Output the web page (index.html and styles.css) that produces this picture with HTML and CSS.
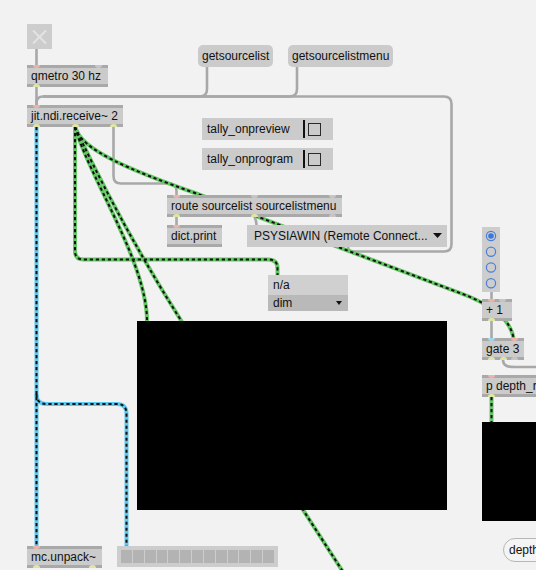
FILE: index.html
```html
<!DOCTYPE html>
<html>
<head>
<meta charset="utf-8">
<title>Patcher</title>
<link rel="stylesheet" href="styles.css">
</head>
<body>
<div class="patch">
  <svg class="cords" width="536" height="570" viewBox="0 0 536 570">
    <defs>
      <path id="c1" d="M75,127 C81,150 130,170 195,193 L460,293 C490,304 510,318 513.5,338"/>
      <path id="c2" d="M75,127 V251 Q75,259.5 83.5,259.5 H268 Q277.5,259.5 277.5,268 V275"/>
      <path id="c3" d="M75,127 C88,175 147,262 147,321"/>
      <path id="c4" d="M75,127 C95,170 130,240 182,322 L345,575"/>
      <path id="c5" d="M491.5,397 V422"/>
      <path id="b1" d="M36.5,127 V546"/>
      <path id="b2" d="M36.5,394 Q36.5,404 46.5,404 H117 Q126.5,404 126.5,414 V546"/>
    </defs>
    <g class="grey">
      <path d="M36.5,49 V65"/>
      <path d="M36.5,87 V105"/>
      <path d="M207,67 V89 Q207,96.5 199.5,96.5 H43 Q36.5,96.5 36.5,103 V105"/>
      <path d="M297,67 V89 Q297,96.5 289.5,96.5 H43"/>
      <path d="M348,247 Q348,251.5 355,251.5 H444 Q451.5,251.5 451.5,244 V104 Q451.5,96.5 444,96.5 H43"/>
      <path d="M113.5,127 V176 Q113.5,183.5 121,183.5 H169 Q176.5,183.5 176.5,191 V195"/>
      <path d="M176.5,217 V225"/>
      <path d="M254.5,217 Q256.5,221 256.5,225"/>
      <path d="M491.5,291 V299"/>
      <path d="M491.5,321 V338"/>
      <path d="M503,360 C503,366 508,367 515,367 H540"/>
    </g>
    <g class="green-base">
      <use href="#c1"/><use href="#c2"/><use href="#c3"/><use href="#c4"/><use href="#c5"/>
    </g>
    <g class="dash">
      <use href="#c1"/><use href="#c2"/><use href="#c3"/><use href="#c4"/><use href="#c5"/>
    </g>
    <g class="blue-base">
      <use href="#b1"/><use href="#b2"/>
    </g>
    <g class="dash">
      <use href="#b1"/><use href="#b2"/>
    </g>
  </svg>

  <div class="toggle">
    <svg width="25" height="25" viewBox="0 0 25 25"><path d="M6,6.5 L19,19.5 M19,6.5 L6,19.5" stroke="#e3e3e3" stroke-width="2" fill="none"/></svg>
  </div>

  <div class="obj n-qmetro"><div class="ports top"><i class="p hot"></i><i class="p"></i></div>qmetro 30 hz<div class="ports bot"><i class="p out"></i></div></div>

  <div class="msg n-msg1">getsourcelist</div>
  <div class="msg n-msg2">getsourcelistmenu</div>

  <div class="obj n-jit"><div class="ports top"><i class="p hot"></i></div>jit.ndi.receive~ 2<div class="ports bot"><i class="p out"></i><i class="p out"></i><i class="p out"></i></div></div>

  <div class="attr n-tally1"><span class="attr-label">tally_onpreview</span><span class="attr-sep"></span><span class="attr-check"></span></div>
  <div class="attr n-tally2"><span class="attr-label">tally_onprogram</span><span class="attr-sep"></span><span class="attr-check"></span></div>

  <div class="obj n-route"><div class="ports top"><i class="p hot"></i><i class="p"></i><i class="p"></i></div>route sourcelist sourcelistmenu<div class="ports bot"><i class="p out"></i><i class="p out"></i><i class="p"></i></div></div>

  <div class="obj n-dict"><div class="ports top"><i class="p hot"></i></div>dict.print</div>

  <div class="umenu"><span>PSYSIAWIN (Remote Connect...</span><svg class="tri" width="9" height="5" viewBox="0 0 9 5"><path d="M0,0 H9 L4.5,5 Z" fill="#111"/></svg></div>

  <div class="na">
    <div class="na-top">n/a</div>
    <div class="na-bot"><span>dim</span><svg width="6" height="4" viewBox="0 0 6 4"><path d="M0,0 H6 L3,4 Z" fill="#111"/></svg></div>
  </div>

  <div class="radio">
    <svg width="18" height="65" viewBox="0 0 18 65">
      <circle cx="9" cy="9" r="4.6" fill="none" stroke="#4a7fd8" stroke-width="1.2"/>
      <circle cx="9" cy="9" r="2.8" fill="#3a76e0"/>
      <circle cx="9" cy="24.7" r="4.6" fill="none" stroke="#4a7fd8" stroke-width="1.2"/>
      <circle cx="9" cy="40.5" r="4.6" fill="none" stroke="#4a7fd8" stroke-width="1.2"/>
      <circle cx="9" cy="56.2" r="4.6" fill="none" stroke="#4a7fd8" stroke-width="1.2"/>
    </svg>
  </div>

  <div class="obj n-plus"><div class="ports top"><i class="p hot"></i><i class="p"></i></div>+ 1<div class="ports bot"><i class="p out"></i></div></div>

  <div class="obj n-gate"><div class="ports top"><i class="p sig"></i><i class="p hot"></i></div>gate 3<div class="ports bot"><i class="p out"></i><i class="p out"></i><i class="p"></i></div></div>

  <div class="obj n-pdepth"><div class="ports top"><i class="p hot"></i></div>p depth_render<div class="ports bot"><i class="p out"></i></div></div>

  <div class="win n-win1"></div>
  <div class="win n-win2"></div>

  <div class="obj n-mc"><div class="ports top"><i class="p hot"></i></div>mc.unpack~<div class="ports bot"><i class="p out"></i><i class="p out"></i></div></div>

  <div class="meter">
    <i></i><i></i><i></i><i></i><i></i><i></i><i></i><i></i><i></i><i></i><i></i><i></i><i></i>
  </div>

  <div class="pill">depth</div>
</div>
</body>
</html>
```

FILE: styles.css
```css
html, body {
  margin: 0;
  padding: 0;
  background: #f2f2f2;
}

.patch {
  position: relative;
  width: 536px;
  height: 570px;
  overflow: hidden;
  background: #f2f2f2;
  font-family: "Liberation Sans", Arial, sans-serif;
  font-size: 12px;
  color: #111;
}

.cords {
  position: absolute;
  left: 0;
  top: 0;
}

.cords path, .cords use {
  fill: none;
}

.grey path {
  stroke: #a8a8a8;
  stroke-width: 2.6;
  fill: none;
}

.green-base use {
  stroke: #64c664;
  stroke-width: 4;
}

.blue-base use {
  stroke: #5cc8ef;
  stroke-width: 4;
}

.dash use {
  stroke: #111;
  stroke-width: 2;
  stroke-dasharray: 3.2 2.8;
}

/* toggle */
.toggle {
  position: absolute;
  left: 27px;
  top: 24px;
  width: 25px;
  height: 25px;
  background: #cdcdcd;
}

.toggle svg {
  display: block;
}

/* object boxes */
.obj {
  position: absolute;
  box-sizing: border-box;
  height: 22px;
  background: #cbcbcb;
  border-top: 3px solid #a9a9a9;
  border-bottom: 3px solid #a9a9a9;
  line-height: 16px;
  padding-left: 4px;
  white-space: nowrap;
}

.ports {
  position: absolute;
  left: 6px;
  right: 6px;
  height: 3px;
  display: flex;
  justify-content: space-between;
}

.ports.top {
  top: -3px;
}

.ports.bot {
  bottom: -3px;
}

.p {
  display: block;
  width: 7px;
  height: 3px;
  background: #c6c6c6;
}

.top .p {
  border-radius: 0 0 3.5px 3.5px;
}

.bot .p {
  border-radius: 3.5px 3.5px 0 0;
}

.p.hot {
  background: #efb3a9;
}

.p.sig {
  background: #a6d5e8;
}

.p.out {
  background: #dfe6a4;
}

.n-qmetro { left: 27px; top: 65px; width: 81px; }
.n-jit { left: 27px; top: 105px; width: 96px; }
.n-route { left: 167px; top: 195px; width: 175px; }
.n-dict { left: 167px; top: 225px; width: 55px; }
.n-plus { left: 482px; top: 299px; width: 30px; }
.n-gate { left: 482px; top: 338px; width: 42px; }
.n-pdepth { left: 482px; top: 375px; width: 120px; }
.n-mc { left: 27px; top: 546px; width: 75px; }

/* message boxes */
.msg {
  position: absolute;
  box-sizing: border-box;
  top: 45px;
  height: 22px;
  line-height: 22px;
  background: #cbcbcb;
  border-radius: 5px;
  padding-left: 4px;
  white-space: nowrap;
}

.n-msg1 { left: 198px; width: 75px; }
.n-msg2 { left: 288px; width: 105px; }

/* attribute toggles */
.attr {
  position: absolute;
  left: 202px;
  width: 131px;
  height: 22px;
  background: #cbcbcb;
  display: flex;
  align-items: center;
  box-sizing: border-box;
  padding-left: 5px;
  white-space: nowrap;
}

.n-tally1 { top: 118px; }
.n-tally2 { top: 148px; }

.attr-label {
  width: 96px;
  line-height: 22px;
}

.attr-sep {
  width: 1.5px;
  height: 18px;
  background: #111;
  margin-right: 3px;
}

.attr-check {
  box-sizing: border-box;
  width: 13px;
  height: 13px;
  border: 1.5px solid #2a2a2a;
  background: #cbcbcb;
}

/* umenu */
.umenu {
  position: absolute;
  left: 247px;
  top: 225px;
  width: 200px;
  height: 22px;
  box-sizing: border-box;
  background: #cbcbcb;
  display: flex;
  align-items: center;
  justify-content: space-between;
  padding: 0 5px 0 7px;
  white-space: nowrap;
  line-height: 22px;
}

.umenu .tri {
  display: block;
  margin-top: -1px;
}

/* n/a attrui */
.na {
  position: absolute;
  left: 268px;
  top: 275px;
  width: 80px;
  height: 36px;
  display: flex;
  flex-direction: column;
}

.na-top {
  height: 20px;
  line-height: 20px;
  background: #d0d0d0;
  padding-left: 5px;
}

.na-bot {
  height: 16px;
  line-height: 16px;
  background: #b9b9b9;
  padding: 0 6px 0 5px;
  display: flex;
  align-items: center;
  justify-content: space-between;
}

.na-bot svg {
  display: block;
}

/* radiogroup */
.radio {
  position: absolute;
  left: 482px;
  top: 227px;
  width: 18px;
  height: 65px;
  background: #cdcdcd;
}

.radio svg {
  display: block;
}

/* windows */
.win {
  position: absolute;
  background: #000;
}

.n-win1 { left: 137px; top: 321px; width: 310px; height: 189px; }
.n-win2 { left: 482px; top: 422px; width: 70px; height: 99px; }

/* meter */
.meter {
  position: absolute;
  left: 117px;
  top: 546px;
  width: 161px;
  height: 21px;
  box-sizing: border-box;
  padding: 4px;
  background: #cdcdcd;
  display: grid;
  grid-template-columns: repeat(13, 1fr);
  gap: 1px;
}

.meter i {
  display: block;
  background: #b3b3b3;
}

/* comment pill */
.pill {
  position: absolute;
  left: 503px;
  top: 538px;
  width: 70px;
  height: 24px;
  box-sizing: border-box;
  border: 1px solid #b7b7b7;
  border-radius: 12px;
  background: #f4f4f4;
  padding-left: 5px;
  line-height: 22px;
  white-space: nowrap;
}
```
